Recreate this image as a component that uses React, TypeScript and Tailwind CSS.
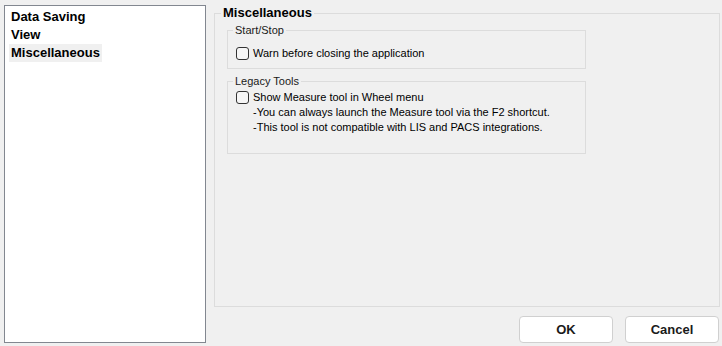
import React from "react";

const items = ["Data Saving", "View", "Miscellaneous"];

function CheckBox() {
  return (
    <span className="inline-block w-[13px] h-[13px] shrink-0 rounded-[3px] border border-[#333333] bg-[#f6f6f6]" />
  );
}

function Button({ label }: { label: string }) {
  return (
    <button className="w-[94px] h-[27px] rounded-[4px] border border-[#d0d0d0] bg-white text-[13px] font-bold text-[#1a1a1a]">
      {label}
    </button>
  );
}

export default function App() {
  return (
    <div
      className="flex w-[722px] h-[346px] bg-[#f0f0f0] text-black overflow-hidden"
      style={{ fontFamily: '"Liberation Sans", Arial, sans-serif' }}
    >
      {/* navigation list */}
      <div className="ml-[4px] mt-[5px] w-[202px] h-[338px] border border-[#828790] bg-white px-[4px] pt-[2px]">
        {items.map((item) => (
          <div
            key={item}
            className={`w-fit h-[18px] px-[2px] text-[13px] font-bold leading-[18px] ${
              item === "Miscellaneous" ? "bg-[#f0f0f0]" : ""
            }`}
          >
            {item}
          </div>
        ))}
      </div>

      <div className="ml-[8px] flex flex-col w-[506px]">
        <fieldset className="mt-[5px] h-[302px] border border-[#dcdcdc]">
          <legend className="ml-[6px] px-[2px] text-[13px] font-bold leading-[16px]">
            Miscellaneous
          </legend>

          <div className="pl-[12px]">
            <fieldset className="mt-[3px] w-[359px] h-[45px] border border-[#dcdcdc]">
              <legend className="ml-[5px] px-[2px] text-[11px] leading-[13px] text-[#1a1a1a]">
                Start/Stop
              </legend>
              <label className="flex items-center gap-[4px] pl-[8px] pt-[9px] text-[11px] leading-[15px]">
                <CheckBox />
                <span>Warn before closing the application</span>
              </label>
            </fieldset>

            <fieldset className="mt-[6px] w-[359px] h-[79px] border border-[#dcdcdc]">
              <legend className="ml-[5px] px-[2px] text-[11px] leading-[13px] text-[#1a1a1a]">
                Legacy Tools
              </legend>
              <div className="pl-[8px] pt-[2px] text-[11px] leading-[15px]">
                <label className="flex items-center gap-[4px]">
                  <CheckBox />
                  <span>Show Measure tool in Wheel menu</span>
                </label>
                <div className="pl-[17px]">
                  <div>-You can always launch the Measure tool via the F2 shortcut.</div>
                  <div>-This tool is not compatible with LIS and PACS integrations.</div>
                </div>
              </div>
            </fieldset>
          </div>
        </fieldset>

        <div className="mt-[9px] flex justify-end gap-[12px] pr-[1px]">
          <Button label="OK" />
          <Button label="Cancel" />
        </div>
      </div>
    </div>
  );
}
